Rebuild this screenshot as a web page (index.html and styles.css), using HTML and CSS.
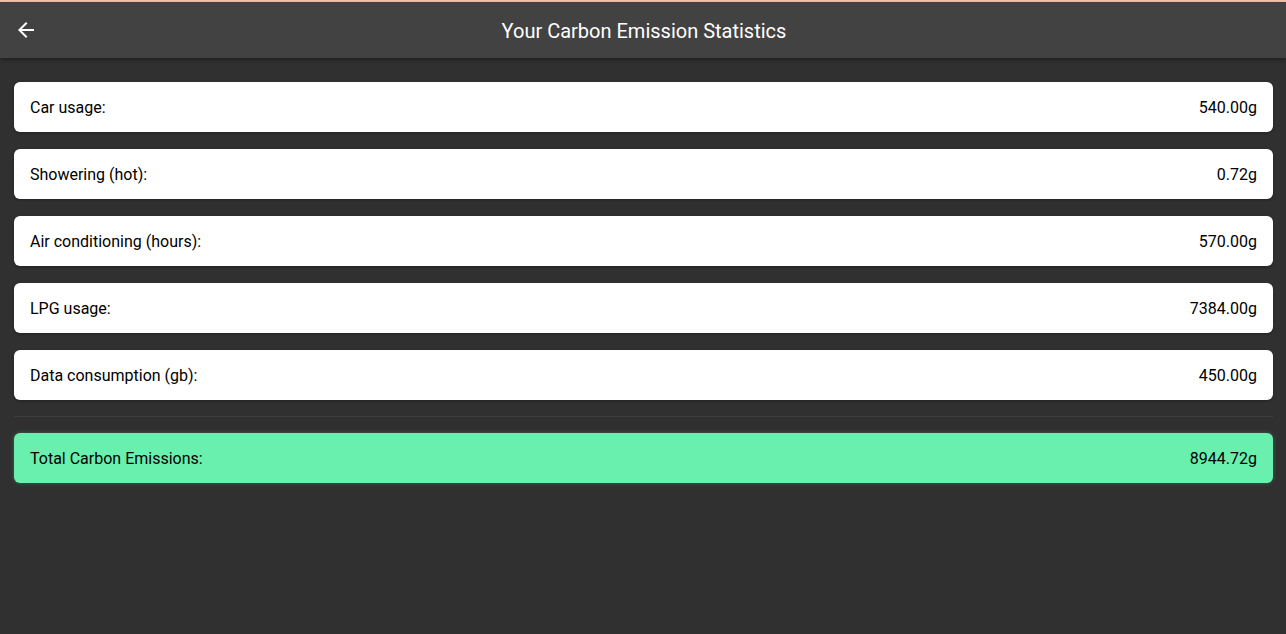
FILE: index.html
```html
<!DOCTYPE html>
<html>
<head>
<meta charset="utf-8">
<link rel="stylesheet" href="styles.css">
</head>
<body>
<div class="topline"></div>
<header class="appbar">
  <button class="back" aria-label="Back">
    <svg width="24" height="24" viewBox="0 0 24 24"><path d="M20 11H7.83l5.59-5.59L12 4l-8 8 8 8 1.41-1.41L7.83 13H20v-2z" fill="#ffffff"/></svg>
  </button>
  <h1 class="title">Your Carbon Emission Statistics</h1>
</header>
<main class="content">
  <div class="list">
    <div class="card"><span>Car usage:</span><span>540.00g</span></div>
    <div class="card"><span>Showering (hot):</span><span>0.72g</span></div>
    <div class="card"><span>Air conditioning (hours):</span><span>570.00g</span></div>
    <div class="card"><span>LPG usage:</span><span>7384.00g</span></div>
    <div class="card"><span>Data consumption (gb):</span><span>450.00g</span></div>
  </div>
  <div class="divider"></div>
  <div class="card total"><span>Total Carbon Emissions:</span><span>8944.72g</span></div>
</main>
</body>
</html>
```
FILE: styles.css
```css
html, body {
  margin: 0;
  padding: 0;
  height: 100%;
}
body {
  background: #303030;
  font-family: Roboto, "Noto Sans", sans-serif;
  overflow: hidden;
}
.topline {
  height: 2px;
  background: #efc3ad;
}
.appbar {
  height: 56px;
  background: #424242;
  display: flex;
  align-items: center;
  justify-content: center;
  position: relative;
  box-shadow: 0 2px 4px rgba(0,0,0,0.35);
}
.back {
  position: absolute;
  left: 14px;
  top: 16px;
  width: 24px;
  height: 24px;
  padding: 0;
  border: 0;
  background: transparent;
  display: flex;
}
.title {
  margin: 2px 0 0 2px;
  color: #ffffff;
  font-size: 20px;
  font-weight: 400;
  letter-spacing: 0;
}
.content {
  padding: 24px 13px 0 14px;
}
.list {
  display: flex;
  flex-direction: column;
  gap: 17px;
}
.card {
  height: 50px;
  box-sizing: border-box;
  background: #ffffff;
  border-radius: 6px;
  display: flex;
  align-items: center;
  justify-content: space-between;
  padding: 0 16px;
  font-size: 16px;
  color: #000000;
  box-shadow: 0 1px 3px rgba(0,0,0,0.3);
}
.divider {
  height: 1px;
  background: #3d3d3d;
  margin: 16px 0;
}
.total {
  background: #69f0ae;
  box-shadow: 0 0 4px rgba(105,240,174,0.25);
}
```
